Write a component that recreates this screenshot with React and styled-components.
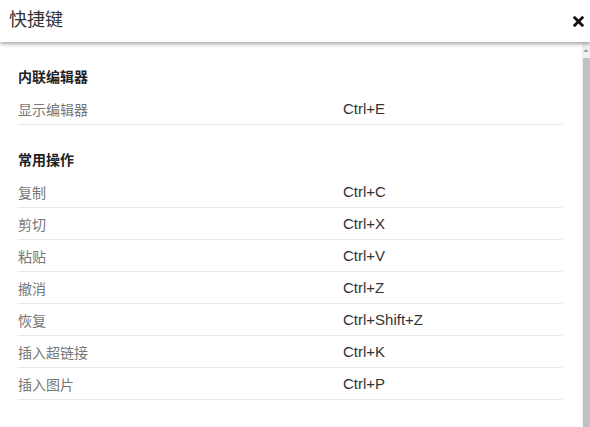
import React from "react";
import styled, { createGlobalStyle } from "styled-components";

const GlobalStyle = createGlobalStyle`
  html, body {
    margin: 0;
    padding: 0;
    background: #fff;
  }
  body {
    font-family: "Liberation Sans", "Noto Sans CJK SC", Arial, sans-serif;
    color: #333;
  }
`;

const sections = [
  {
    title: "内联编辑器",
    items: [["显示编辑器", "Ctrl+E"]],
  },
  {
    title: "常用操作",
    items: [
      ["复制", "Ctrl+C"],
      ["剪切", "Ctrl+X"],
      ["粘贴", "Ctrl+V"],
      ["撤消", "Ctrl+Z"],
      ["恢复", "Ctrl+Shift+Z"],
      ["插入超链接", "Ctrl+K"],
      ["插入图片", "Ctrl+P"],
    ],
  },
];

const Dialog = styled.div`
  width: 590px;
  height: 427px;
  display: flex;
  flex-direction: column;
  overflow: hidden;
  background: #fff;
`;

const Header = styled.div`
  height: 42px;
  flex: none;
  display: flex;
  align-items: center;
  justify-content: space-between;
  padding: 0 6px 0 9px;
  box-shadow: 0 2px 4px rgba(0, 0, 0, 0.35);
  position: relative;
  z-index: 1;
`;

const Title = styled.h3`
  margin: 0;
  font-size: 18px;
  font-weight: normal;
  color: #333;
  line-height: 1;
  padding-bottom: 2px;
`;

const Close = styled.button`
  border: 0;
  background: none;
  padding: 0;
  width: 11px;
  height: 11px;
  display: flex;
  cursor: pointer;
`;

const Body = styled.div`
  flex: 1;
  min-height: 0;
  display: flex;
`;

const Content = styled.div`
  flex: 1;
  padding: 0 20px 0 18px;
  overflow: hidden;
`;

const ScrollBar = styled.div`
  width: 8px;
  flex: none;
  display: flex;
  flex-direction: column;
  background: #f1f1f1;
  padding-top: 3px;
`;

const ScrollArrow = styled.div`
  height: 13px;
  display: flex;
  justify-content: center;
  padding-top: 4px;
  box-sizing: border-box;

  &::before {
    content: "";
    width: 0;
    height: 0;
    border-left: 3px solid transparent;
    border-right: 3px solid transparent;
    border-bottom: 3px solid #a3a3a3;
  }
`;

const ScrollThumb = styled.div`
  flex: 1;
  margin-left: 1px;
  background: #c1c1c1;
`;

const SectionTitle = styled.h4`
  margin: 0;
  padding: 25px 0 6px;
  font-size: 14px;
  line-height: 20px;
  font-weight: bold;
  color: #222;
`;

const Row = styled.div`
  display: grid;
  grid-template-columns: 325px 1fr;
  height: 31px;
  align-items: center;
  border-bottom: 1px solid #e8e8e8;
`;

const Label = styled.span`
  font-size: 14px;
  color: #777;
`;

const Keys = styled.span`
  font-size: 15px;
  color: #333;
`;

export default function App() {
  return (
    <>
      <GlobalStyle />
      <Dialog>
        <Header>
          <Title>快捷键</Title>
          <Close aria-label="关闭">
            <svg width="11" height="11" viewBox="0 0 11 11">
              <path
                d="M1.8 1.8 L9.2 9.2 M9.2 1.8 L1.8 9.2"
                stroke="#111"
                strokeWidth="2.8"
                strokeLinecap="square"
              />
            </svg>
          </Close>
        </Header>
        <Body>
          <Content>
            {sections.map((s) => (
              <section key={s.title}>
                <SectionTitle>{s.title}</SectionTitle>
                {s.items.map(([label, keys]) => (
                  <Row key={label}>
                    <Label>{label}</Label>
                    <Keys>{keys}</Keys>
                  </Row>
                ))}
              </section>
            ))}
          </Content>
          <ScrollBar>
            <ScrollArrow />
            <ScrollThumb />
          </ScrollBar>
        </Body>
      </Dialog>
    </>
  );
}
